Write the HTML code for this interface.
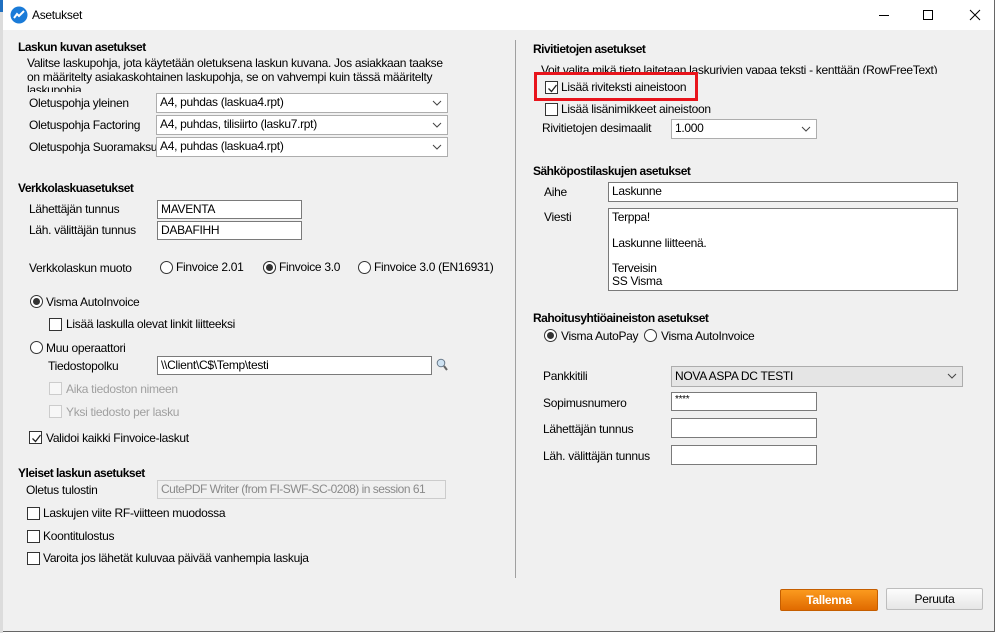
<!DOCTYPE html>
<html><head><meta charset="utf-8">
<style>
*{margin:0;padding:0;box-sizing:border-box}
body{width:998px;height:633px;overflow:hidden;background:#fff;font-family:"Liberation Sans",sans-serif;font-size:12px;letter-spacing:-0.3px;color:#000;position:relative}
.a{position:absolute;white-space:nowrap;line-height:14px}
.b{font-weight:bold;letter-spacing:-0.5px}
.in{position:absolute;background:#fff;border:1px solid #7a7a7a;padding:2px 3px;line-height:13px;white-space:nowrap;overflow:hidden}
.cb{position:absolute;background:#f0f0f0;border:1px solid #adadad;padding:1px 3px;line-height:15px;white-space:nowrap}
.cb svg{position:absolute;right:5px;top:6px}
.chk{position:absolute;width:13px;height:13px;border:1px solid #333;background:#fff}
.chk.dis{border-color:#ccc;background:#f7f7f7}
.rad{position:absolute;width:13px;height:13px;border:1px solid #333;border-radius:50%;background:#fff}
.rad.on::after{content:"";position:absolute;left:2px;top:2px;width:7px;height:7px;border-radius:50%;background:#333}
.tick{position:absolute;left:1px;top:1px}
.g{color:#a0a0a0}
</style></head><body>
<div style="position:absolute;left:0;top:0;width:3px;height:633px;background:#dcdcdc"></div>
<div style="position:absolute;left:0;top:0;width:3px;height:12px;background:#1f6fc0"></div>
<div style="position:absolute;left:3px;top:0;width:992px;height:632px;border-right:1px solid #666;border-bottom:1px solid #666;background:#f0f0f0"></div>
<div style="position:absolute;left:3px;top:0;width:991px;height:30px;background:#fff"></div>
<svg style="position:absolute;left:10px;top:6px" width="18" height="18" viewBox="0 0 18 18"><circle cx="9" cy="9" r="8.5" fill="#1a7bd8"/><path d="M4 12 L7 8 L9 10 L14 5" stroke="#fff" stroke-width="2" fill="none"/></svg>
<div class="a" style="left:32px;top:8px;font-size:12px">Asetukset</div>
<svg style="position:absolute;left:876px;top:9px" width="110" height="12"><line x1="3" y1="6.5" x2="13" y2="6.5" stroke="#000"/><rect x="47.5" y="1.5" width="9" height="9" fill="none" stroke="#000"/><path d="M94 1 L104 11 M104 1 L94 11" stroke="#000"/></svg>

<!-- Left column -->
<div class="a b" style="left:18px;top:40px">Laskun kuvan asetukset</div>
<div style="position:absolute;left:27px;top:57px;width:430px;height:35px;overflow:hidden;line-height:13.5px;white-space:nowrap">Valitse laskupohja, jota käytetään oletuksena laskun kuvana. Jos asiakkaan taakse<br>on määritelty asiakaskohtainen laskupohja, se on vahvempi kuin tässä määritelty<br>laskupohja</div>
<div class="a" style="left:29px;top:96px">Oletuspohja yleinen</div>
<div class="a" style="left:29px;top:118px">Oletuspohja Factoring</div>
<div class="a" style="left:29px;top:140px">Oletuspohja Suoramaksu</div>
<div class="cb" style="left:156px;top:93px;width:292px;height:20px;background:#fff">A4, puhdas (laskua4.rpt)<svg width="10" height="6"><path d="M1 1 L5 5 L9 1" stroke="#444" fill="none"/></svg></div>
<div class="cb" style="left:156px;top:115px;width:292px;height:20px;background:#fff">A4, puhdas, tilisiirto (lasku7.rpt)<svg width="10" height="6"><path d="M1 1 L5 5 L9 1" stroke="#444" fill="none"/></svg></div>
<div class="cb" style="left:156px;top:137px;width:292px;height:20px;background:#fff">A4, puhdas (laskua4.rpt)<svg width="10" height="6"><path d="M1 1 L5 5 L9 1" stroke="#444" fill="none"/></svg></div>

<div class="a b" style="left:18px;top:181px">Verkkolaskuasetukset</div>
<div class="a" style="left:29px;top:202px">Lähettäjän tunnus</div>
<div class="a" style="left:29px;top:223px">Läh. välittäjän tunnus</div>
<div class="in" style="left:157px;top:200px;width:145px;height:19px">MAVENTA</div>
<div class="in" style="left:157px;top:221px;width:145px;height:19px">DABAFIHH</div>

<div class="a" style="left:29px;top:261px">Verkkolaskun muoto</div>
<div class="rad" style="left:160px;top:261px"></div><div class="a" style="left:176px;top:260px">Finvoice 2.01</div>
<div class="rad" style="left:263px;top:261px"></div><div class="rad on" style="left:263px;top:261px"></div><div class="a" style="left:279px;top:260px">Finvoice 3.0</div>
<div class="rad" style="left:358px;top:261px"></div><div class="a" style="left:374px;top:260px">Finvoice 3.0 (EN16931)</div>

<div class="rad on" style="left:30px;top:295px"></div><div class="a" style="left:46px;top:295px">Visma AutoInvoice</div>
<div class="chk" style="left:49px;top:318px"></div><div class="a" style="left:66px;top:317px">Lisää laskulla olevat linkit liitteeksi</div>
<div class="rad" style="left:30px;top:341px"></div><div class="a" style="left:46px;top:341px">Muu operaattori</div>
<div class="a" style="left:48px;top:359px">Tiedostopolku</div>
<div class="in" style="left:157px;top:356px;width:275px;height:19px">\\Client\C$\Temp\testi</div>
<svg style="position:absolute;left:436px;top:358px" width="12" height="13"><circle cx="5" cy="5" r="3.8" fill="#cfe3f3" stroke="#6a7a8a"/><line x1="8" y1="8" x2="11" y2="12" stroke="#666" stroke-width="2"/></svg>
<div class="chk dis" style="left:49px;top:382px"></div><div class="a g" style="left:66px;top:382px">Aika tiedoston nimeen</div>
<div class="chk dis" style="left:49px;top:405px"></div><div class="a g" style="left:66px;top:405px">Yksi tiedosto per lasku</div>
<div class="chk" style="left:29px;top:431px"><svg class="tick" width="11" height="11"><path d="M1.5 5.5 L4.5 8.5 L9.5 2" stroke="#222" stroke-width="1.3" fill="none"/></svg></div><div class="a" style="left:46px;top:431px">Validoi kaikki Finvoice-laskut</div>

<div class="a b" style="left:18px;top:466px">Yleiset laskun asetukset</div>
<div class="a" style="left:26px;top:483px">Oletus tulostin</div>
<div class="in" style="left:157px;top:480px;width:289px;height:19px;background:#f0f0f0;border-color:#ccc;color:#8a8a8a;letter-spacing:-0.5px">CutePDF Writer (from FI-SWF-SC-0208) in session 61</div>
<div class="chk" style="left:27px;top:507px"></div><div class="a" style="left:43px;top:506px">Laskujen viite RF-viitteen muodossa</div>
<div class="chk" style="left:27px;top:530px"></div><div class="a" style="left:43px;top:529px">Koontitulostus</div>
<div class="chk" style="left:27px;top:552px"></div><div class="a" style="left:43px;top:551px">Varoita jos lähetät kuluvaa päivää vanhempia laskuja</div>

<div style="position:absolute;left:515px;top:40px;width:1px;height:538px;background:#a0a0a0"></div>

<!-- Right column -->
<div class="a b" style="left:533px;top:42px">Rivitietojen asetukset</div>
<div class="a" style="left:541px;top:63px;height:11px;overflow:hidden">Voit valita mikä tieto laitetaan laskurivien vapaa teksti - kenttään (RowFreeText)</div>
<div style="position:absolute;left:534px;top:72px;width:164px;height:29px;border:3px solid #e8141c"></div>
<div class="chk" style="left:545px;top:81px"><svg class="tick" width="11" height="11"><path d="M1.5 5.5 L4.5 8.5 L9.5 2" stroke="#222" stroke-width="1.3" fill="none"/></svg></div><div class="a" style="left:561px;top:80px">Lisää riviteksti aineistoon</div>
<div class="chk" style="left:545px;top:103px"></div><div class="a" style="left:561px;top:102px">Lisää lisänimikkeet aineistoon</div>
<div class="a" style="left:542px;top:121px">Rivitietojen desimaalit</div>
<div class="cb" style="left:671px;top:119px;width:146px;height:20px;background:#fff">1.000<svg width="10" height="6"><path d="M1 1 L5 5 L9 1" stroke="#444" fill="none"/></svg></div>

<div class="a b" style="left:533px;top:164px">Sähköpostilaskujen asetukset</div>
<div class="a" style="left:544px;top:185px">Aihe</div>
<div class="in" style="left:608px;top:182px;width:350px;height:20px">Laskunne</div>
<div class="a" style="left:544px;top:210px">Viesti</div>
<div class="in" style="left:608px;top:208px;width:350px;height:83px;line-height:12.8px;white-space:normal;padding-top:2px">Terppa!<br><br>Laskunne liitteenä.<br><br>Terveisin<br>SS Visma</div>

<div class="a b" style="left:533px;top:311px">Rahoitusyhtiöaineiston asetukset</div>
<div class="rad on" style="left:544px;top:329px"></div><div class="a" style="left:561px;top:329px">Visma AutoPay</div>
<div class="rad" style="left:644px;top:329px"></div><div class="a" style="left:661px;top:329px">Visma AutoInvoice</div>
<div class="a" style="left:543px;top:369px">Pankkitili</div>
<div class="cb" style="left:671px;top:366px;width:292px;height:21px;background:#e5e5e5;padding-top:2px">NOVA ASPA DC TESTI<svg width="10" height="6"><path d="M1 1 L5 5 L9 1" stroke="#444" fill="none"/></svg></div>
<div class="a" style="left:543px;top:396px">Sopimusnumero</div>
<div class="in" style="left:671px;top:392px;width:146px;height:19px;font-size:10px;line-height:9px">****</div>
<div class="a" style="left:543px;top:422px">Lähettäjän tunnus</div>
<div class="in" style="left:671px;top:418px;width:146px;height:20px"></div>
<div class="a" style="left:543px;top:449px">Läh. välittäjän tunnus</div>
<div class="in" style="left:671px;top:445px;width:146px;height:20px"></div>

<div style="position:absolute;left:780px;top:589px;width:98px;height:22px;background:linear-gradient(#fb9a1e,#e06a00);border:1px solid #c55e00;border-radius:2px;color:#fff;text-align:center;line-height:20px;font-weight:bold">Tallenna</div>
<div style="position:absolute;left:886px;top:588px;width:97px;height:22px;background:linear-gradient(#fdfdfd,#e6e6e6);border:1px solid #bdbdbd;border-radius:2px;text-align:center;line-height:20px">Peruuta</div>
</body></html>
